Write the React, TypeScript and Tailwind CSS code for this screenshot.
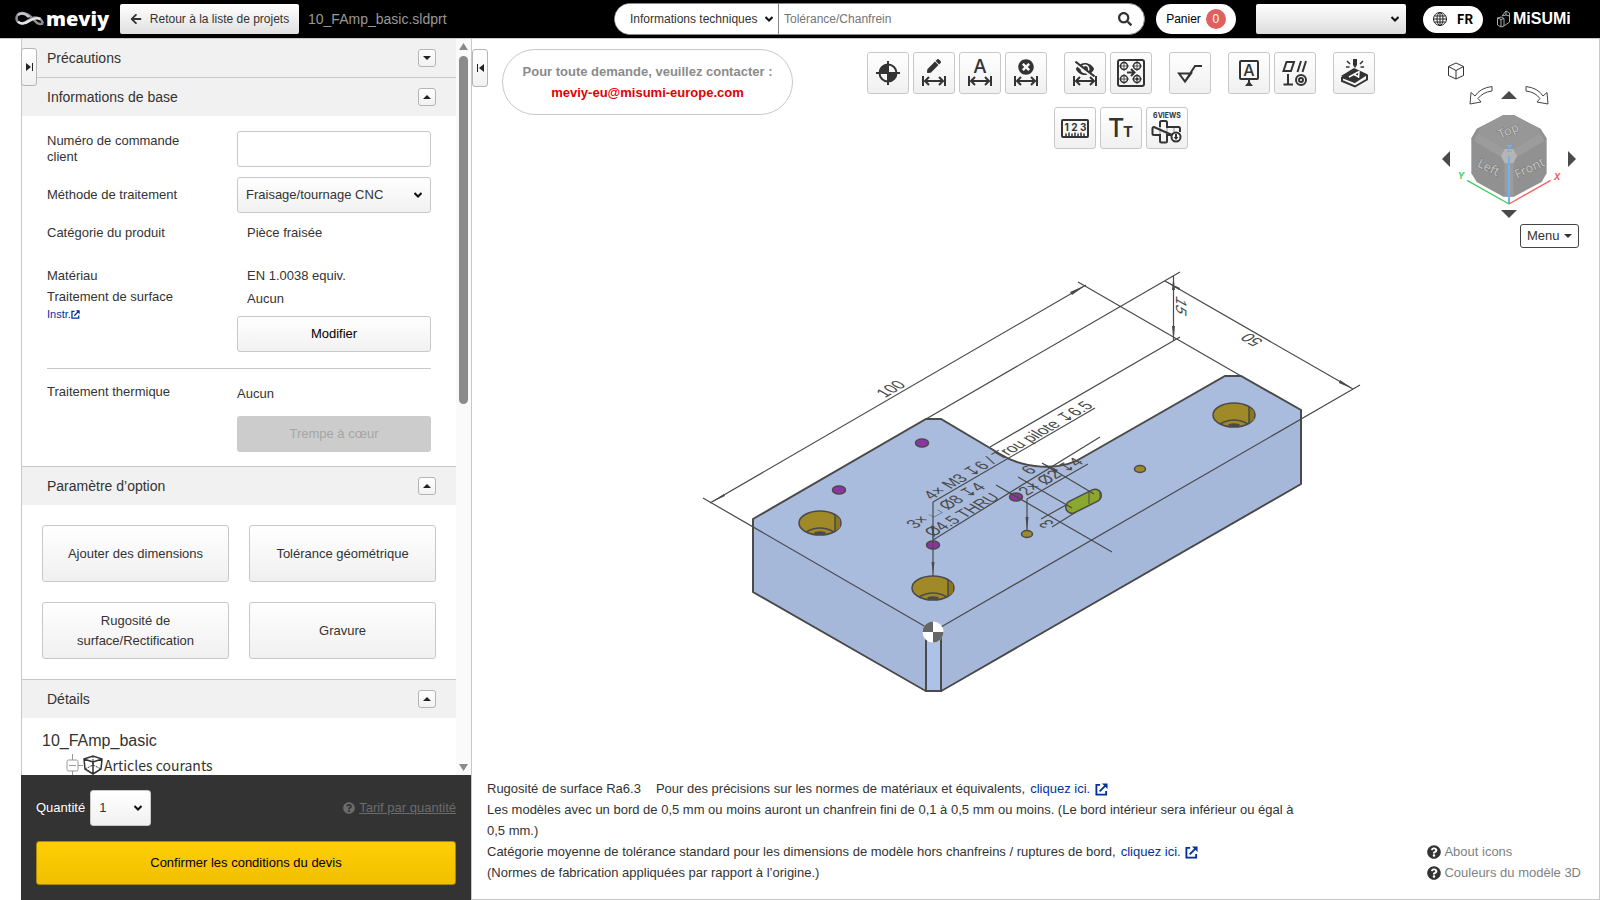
import React from "react";
import { FaArrowLeft, FaEyeSlash, FaPen, FaQuestionCircle, FaSearch, FaTimesCircle } from "react-icons/fa";

const Logo = () => (
  <a href="#" className="flex w-[90px] items-center text-white" aria-label="meviy">
    <svg width="30" height="16" viewBox="0 0 30 16" fill="none" className="shrink-0">
      <path
        d="M28 12.5C25 14 22 12.500 19 9C15.500 5 12 2 7 2C3.500 2 1.500 4.500 1.500 7.500C1.500 10.500 4 12.500 7 12.500C12 12.500 14.500 6.500 20 6.500C24 6.500 26.500 7.500 28 12.500"
        stroke="#8f8f93"
        strokeWidth="2.500"
      />
      <path d="M3 10.500C7 15 12 11.500 15 9.500C18 7.500 21 6 25.500 8" stroke="#e4e4e8" strokeWidth="2.500" />
      <path d="M3 4C7 1 11 3 14 6" stroke="#c9c9ce" strokeWidth="2.500" />
    </svg>
    <span className="ml-px font-['Open_Sans'] text-[20px] leading-5 font-extrabold">meviy</span>
  </a>
);

const ExternalIcon = ({ size }: { size: number }) => (
  <svg width={size} height={size} viewBox="0 0 14 14" className="inline-block" fill="none" stroke="currentColor" strokeWidth="2">
    <path d="M5.500 2H1.500V12.500H12V8.500" />
    <path d="M5 9L12 2" />
    <path d="M7.500 0.500H13.500V6.500Z" fill="currentColor" stroke="none" />
  </svg>
);

const Chevron = ({ className }: { className: string }) => (
  <svg
    width="8"
    height="6"
    viewBox="0 0 8 6"
    fill="none"
    stroke="#111"
    strokeWidth="2"
    className={`pointer-events-none absolute top-1/2 -translate-y-1/2 ${className}`}
  >
    <path d="M0.500 1L4 4.500L7.500 1" />
  </svg>
);

const SectionHeader = ({ title, open = true, first = false }: { title: string; open?: boolean; first?: boolean }) => (
  <div
    className={
      first
        ? "flex h-[38px] items-center justify-between bg-[#f1f1f1] pr-5 pl-[25px]"
        : "flex h-[39px] items-center justify-between border-t border-[#c8c8c8] bg-[#f1f1f1] pr-5 pl-[25px]"
    }
  >
    <h2 className="text-sm">{title}</h2>
    <button
      aria-label={title}
      aria-expanded={open}
      className="flex size-[18px] items-center justify-center rounded-[3px] border border-[#b5b5b5] bg-linear-to-b from-white to-[#f1f1f1]"
    >
      <svg width="8" height="4" viewBox="0 0 8 4" fill="#222">
        {open ? <path d="M4 0L8 4H0Z" /> : <path d="M0 0H8L4 4Z" />}
      </svg>
    </button>
  </div>
);

const ToolButton = ({ label, children }: { label: string; children: React.ReactNode }) => (
  <button
    aria-label={label}
    className="size-[42px] rounded-[3px] border border-[#c8c8c8] bg-linear-to-b from-white to-[#f0f0f0]"
  >
    <svg width="40" height="40" viewBox="1 1 40 40" fill="none" stroke="#333" strokeWidth="2">
      {children}
    </svg>
  </button>
);

// width mark shared by the dimension tools
const Span = () => (
  <path d="M10 24V34M32 24V34M12 29H30M16 25L12 29L16 33M26 25L30 29L26 33" />
);

const Hole = ({ x, y }: { x: number; y: number }) => (
  <g strokeWidth="1.5">
    <circle cx={x} cy={y} r="3.5" />
    <path strokeWidth="0.8" d={`M${x - 5} ${y}H${x + 5}M${x} ${y - 5}V${y + 5}`} />
  </g>
);

const Toolbar = () => (
  <div className="flex flex-1 flex-col items-center gap-[13px] pt-[13px] pl-[10px]">
    <div className="flex gap-[17px]">
      <div className="flex gap-1">
        <ToolButton label="Origine">
          <circle cx="21" cy="21" r="8.500" />
          <path d="M21 21V12.500A8.500 8.500 0 0 0 12.500 21ZM21 21V29.500A8.500 8.500 0 0 0 29.500 21Z" fill="#333" stroke="none" />
          <path d="M21 9V33M9 21H33" />
        </ToolButton>
        <ToolButton label="Modifier la dimension">
          <FaPen x="14" y="7" size={14} color="#333" stroke="none" />
          <Span />
        </ToolButton>
        <ToolButton label="Ajouter un texte">
          <text x="21" y="21" fontSize="19" textAnchor="middle" fill="#333" stroke="none" className="font-['Inter'] font-medium">
            A
          </text>
          <Span />
        </ToolButton>
        <ToolButton label="Supprimer la dimension">
          <FaTimesCircle x="13" y="7" size={16} color="#333" stroke="none" />
          <Span />
        </ToolButton>
      </div>
      <div className="flex gap-1">
        <ToolButton label="Masquer la dimension">
          <FaEyeSlash x="11" y="7" size={20} color="#333" stroke="none" />
          <Span />
        </ToolButton>
        <ToolButton label="Grouper les trous">
          <rect x="8" y="8" width="26" height="26" rx="2" />
          <Hole x={14} y={14} />
          <Hole x={27} y={14} />
          <Hole x={14} y={27} />
          <Hole x={27} y={27} />
          <circle cx="27" cy="27" r="1.500" fill="#333" stroke="none" />
          <path d="M17 20.500H24M21 17L24.500 20.500L21 24" />
        </ToolButton>
      </div>
      <ToolButton label="Rugosité">
        <path d="M10 21.500H22L16 29.500ZM16 29.500L26 14H33" />
      </ToolButton>
      <div className="flex gap-1">
        <ToolButton label="Référence">
          <rect x="12" y="9" width="18" height="18" rx="1" />
          <text x="21" y="24" fontSize="16" textAnchor="middle" fill="#333" stroke="none" className="font-['Inter'] font-medium">
            A
          </text>
          <path d="M21 28V31" />
          <path d="M21 29L25 34H17Z" fill="#333" stroke="none" />
        </ToolButton>
        <ToolButton label="Tolérance géométrique">
          <path d="M9.500 19L12.500 10H20L17 19ZM23.500 20L27 9M28.500 20L32 9M14 22V32M9.500 32.500H19" />
          <circle cx="27" cy="28" r="5" />
          <circle cx="27" cy="28" r="2" />
        </ToolButton>
      </div>
      <ToolButton label="Gravure">
        <path d="M8 24L21 16L35 22.500L22 31Z" fill="#333" stroke="none" />
        <path d="M9 25V29L22 34.500L34 27.500V23M22 30L9 25" strokeWidth="2" />
        <path d="M16 25L26 19.500L25.500 26M21 22.500L25 24.500" stroke="#fff" strokeWidth="1.500" />
        <path d="M20 7H24V13L22 16L20 13Z" fill="#333" stroke="none" />
        <path d="M14 9L17 12M13 15H16.500M30 9L27 12M31 15H27.500" strokeWidth="1.500" />
      </ToolButton>
    </div>
    <div className="flex gap-1">
      <ToolButton label="Dimensions">
        <rect x="8" y="13" width="26" height="17" rx="1" />
        <text x="21.500" y="24" fontSize="10" textAnchor="middle" fill="#333" stroke="none" className="font-['Inter'] font-bold">
          1 2 3
        </text>
        <path d="M12 29V26.500M15 29V25.500M18 29V26.500M21 29V25.500M24 29V26.500M27 29V25.500M30 29V26.500" strokeWidth="1.500" />
      </ToolButton>
      <ToolButton label="Taille du texte">
        <text x="8" y="30" fontSize="25" fill="#333" stroke="none" className="font-['Inter'] font-medium">
          T
        </text>
        <text x="23" y="30" fontSize="15" fill="#333" stroke="none" className="font-['Inter'] font-bold">
          T
        </text>
      </ToolButton>
      <ToolButton label="6 vues">
        <text x="21" y="11" fontSize="7" textAnchor="middle" fill="#333" stroke="none" className="font-['Inter'] font-bold">
          6VIEWS
        </text>
        <path d="M14 20V15.500Q14 14 15.500 14H19.500Q21 14 21 15.500V20H32.500Q34 20 34 22V25M26 28H21V34Q21 35.500 19.500 35.500H15.500Q14 35.500 14 34V28H8Q6.500 28 6.500 26.500V21.500Q6.500 20 8 20Z" />
        <path d="M14 20V28M21 20V28M28 20V25" strokeWidth="0.500" />
        <circle cx="30" cy="30" r="4.500" fill="#fff" />
        <path d="M30 27V31" />
        <path d="M27.500 30H32.500L30 33Z" fill="#333" stroke="none" />
      </ToolButton>
    </div>
  </div>
);

const ViewCube = () => (
  <div className="mr-5 flex w-[140px] flex-col items-center pt-[23px]">
    <button aria-label="Vue isométrique" className="mr-auto ml-2">
      <svg width="18" height="18" viewBox="0 0 18 18" fill="none" stroke="#333">
        <path d="M1.500 4.500L9 1L16.500 4.500V13.500L9 17L1.500 13.500ZM1.500 4.500L9 8.500L16.500 4.500M9 8.500V17" />
      </svg>
    </button>
    <div className="mt-1 flex h-[22px] items-center gap-2">
      <button aria-label="Pivoter à gauche">
        <svg width="24" height="20" viewBox="0 0 24 20" fill="none" stroke="#444">
          <path d="M23 1.500Q11 3 6 11L2 7.500L1 19L12 17L9 13.500Q14 7 23 6Z" />
        </svg>
      </button>
      <button aria-label="Haut">
        <svg width="16" height="8" viewBox="0 0 16 8" fill="#4a4a4a">
          <path d="M8 0L16 8H0Z" />
        </svg>
      </button>
      <button aria-label="Pivoter à droite">
        <svg width="24" height="20" viewBox="0 0 24 20" fill="none" stroke="#444">
          <path d="M1 1.500Q13 3 18 11L22 7.500L23 19L12 17L15 13.500Q10 7 1 6Z" />
        </svg>
      </button>
    </div>
    <div className="mt-[6px] flex w-full items-center justify-between px-[3px]">
      <button aria-label="Gauche">
        <svg width="8" height="16" viewBox="0 0 8 16" fill="#4a4a4a">
          <path d="M8 0V16L0 8Z" />
        </svg>
      </button>
      <svg width="106" height="94" viewBox="1068 336 318 282">
        <path d="M1210 345H1242L1322 386L1340 415V520L1325 546L1242 590H1210L1130 546L1114 520V415L1130 386Z" fill="#919191" />
        <path d="M1210 345H1242L1316 386L1320 400L1240 447H1214L1134 400L1138 386Z" fill="#979797" />
        <path d="M1134 400L1214 447L1204 472L1122 422ZM1320 400L1240 447L1250 472L1334 422ZM1214 490H1240V590H1214Z" fill="#9c9c9c" />
        <path d="M1214 447H1240L1251 468L1240 490H1214L1203 468Z" fill="#b5b5b5" />
        <g fill="#c4c4c4" stroke="#777" strokeWidth="3" paintOrder="stroke" fontSize="38" textAnchor="middle" className="font-['Noto_Sans']">
          <text transform="translate(1230 404) rotate(-24)">Top</text>
          <text transform="translate(1160 514) rotate(26)">Left</text>
          <text transform="translate(1294 516) rotate(-26)">Front</text>
        </g>
        <path d="M1227 468V612" stroke="#70b0f5" strokeWidth="6" />
        <path d="M1227 612L1101 541" stroke="#3fce5f" strokeWidth="4" />
        <path d="M1227 612L1352 541" stroke="#f5605f" strokeWidth="4" />
        <g fontSize="27" textAnchor="middle" className="font-['Inter'] font-bold italic">
          <text x="1228" y="456" fill="#70b0f5">Z</text>
          <text x="1083" y="538" fill="#3fce5f">Y</text>
          <text x="1371" y="540" fill="#f5605f">X</text>
        </g>
      </svg>
      <button aria-label="Droite">
        <svg width="8" height="16" viewBox="0 0 8 16" fill="#4a4a4a">
          <path d="M0 0V16L8 8Z" />
        </svg>
      </button>
    </div>
    <button aria-label="Bas" className="mt-1">
      <svg width="16" height="8" viewBox="0 0 16 8" fill="#4a4a4a">
        <path d="M0 0H16L8 8Z" />
      </svg>
    </button>
    <button className="mt-[6px] ml-auto flex h-6 w-[59px] items-center justify-between rounded-[3px] border border-[#444] px-[6px] text-[13px]">
      Menu
      <svg width="8" height="4" viewBox="0 0 8 4" fill="#333">
        <path d="M0 0H8L4 4Z" />
      </svg>
    </button>
  </div>
);

const BIG_HOLES = [
  [820, 523],
  [933, 588],
  [1234, 415],
];
const TAPPED_HOLES = [
  [922, 443],
  [839, 490],
  [1016, 497],
  [933, 545],
];
const PIN_HOLES = [
  [1027, 534],
  [1140, 469],
];

const Model = () => (
  <svg width="670" height="434" viewBox="701 262 670 434" fill="none" stroke="#4a4a4a" strokeWidth="1.5" className="mx-auto mt-[14px]">
    <path
      d="M753 519L926 419H941L1000 454C1022 468 1060 473 1085 456L1225 376H1241L1301 410V484L941 691H926L753 592Z"
      fill="#aabcdd"
      strokeWidth="2"
    />
    <path d="M754 528L926 627V690L754 591ZM941 627L1300 420V483L941 690Z" fill="#a6b8da" stroke="none" />
    <path d="M926 627H941V691H926Z" fill="#adc2e6" strokeWidth="2" />
    {BIG_HOLES.map(([x, y]) => (
      <g key={x}>
        <ellipse cx={x} cy={y} rx="21" ry="12" fill="#a08a28" />
        <path d={`M${x + 15} ${y - 8}L${x + 20} ${y - 4}L${x + 20} ${y + 5}L${x + 15} ${y + 8}Z`} fill="#8b771f" stroke="none" />
        <path d={`M${x - 14} ${y + 9}Q${x} ${y + 1} ${x + 14} ${y + 9}M${x + 15} ${y - 8}V${y + 8}`} />
        <ellipse cx={x} cy={y + 10} rx="5" ry="1" fill="#4a4a4a" />
      </g>
    ))}
    {TAPPED_HOLES.map(([x, y]) => (
      <ellipse key={x} cx={x} cy={y} rx="6.5" ry="4" fill="#8c34a0" />
    ))}
    {PIN_HOLES.map(([x, y]) => (
      <ellipse key={x} cx={x} cy={y} rx="5.500" ry="3.500" fill="#a08a28" />
    ))}
    <path d="M1072 507L1095 495.500" strokeWidth="14" strokeLinecap="round" />
    <path d="M1072 507L1095 495.500" stroke="#8ba82e" strokeWidth="11" strokeLinecap="round" />
    <path d="M1089 492V504M1100 491V499" strokeWidth="1" />

    <path
      strokeWidth="1.2"
      d="M703 498L926 627M710 503L1086 285M1078 282L1241 376M926 419L1180 272M990 447L1180 337M1173.500 276V341M1165 281L1353 389M941 627L1360 385"
    />
    <path strokeWidth="1.2" d="M933 502L1095 408M933 502V576M933 540L1100 437M1027 499V531M1027 499L1088 464" />
    <path strokeWidth="1.2" d="M1042 463L1094 494M1018 477L1072 508M996 485L1112 552M1041 519L1066 505M1052 527L1076 512" />
    <g fill="#4a4a4a" stroke="none">
      <path d="M710 503L724 494L725 496ZM1086 285L1070 292L1072 295ZM1173.500 276L1172 290H1175ZM1173.500 341L1172 326H1175ZM1165 281L1180 288L1179 290ZM1353 389L1339 383L1340 380Z" />
      <path d="M933 574L931.500 562H934.500ZM933 540L931.500 526H934.500ZM1027 530L1025.500 517H1028.500ZM1042 463L1056 473L1058 470Z" />
    </g>
    {/* notes lie in the planes of the part */}
    <g fill="#4a4a4a" stroke="none" fontSize="15" className="font-['Liberation_Sans','DejaVu_Sans',sans-serif]">
      <text transform="translate(885 398) rotate(-30) skewX(30)">100</text>
      <text transform="translate(1176 295) rotate(90) skewX(-30)">15</text>
      <text transform="translate(1264 341) rotate(210) skewX(-30)">50</text>
      <text transform="translate(932 500) rotate(-30) skewX(30)">4× M3 ↧6 / Trou pilote ↧6.5</text>
      <text transform="translate(915 529) rotate(-30) skewX(30)">3× ⌴ Ø8 ↧4</text>
      <text transform="translate(933 537) rotate(-30) skewX(30)">Ø4.5 THRU</text>
      <text transform="translate(1027 496) rotate(-30) skewX(30)">2× Ø2 ↧4</text>
      <text transform="translate(1030 475) rotate(-30) skewX(30)">6</text>
      <text transform="translate(1055 523) rotate(210) skewX(-30)">3</text>
    </g>
    <g stroke="none">
      <circle cx="933" cy="632" r="10.500" fill="#fff" />
      <path d="M933 632V621.500A10.500 10.500 0 0 0 922.500 632ZM933 632V642.500A10.500 10.500 0 0 0 943.500 632Z" fill="#666" />
    </g>
  </svg>
);

const OPTIONS = ["Ajouter des dimensions", "Tolérance géométrique", "Rugosité de surface/Rectification", "Gravure"];

const Sidebar = () => (
  <aside className="relative ml-[21px] flex w-[451px] flex-col border-r border-[#c8c8c8]">
    <button
      aria-label="Réduire le panneau"
      className="absolute top-[9px] left-0 z-10 flex h-[38px] w-4 items-center justify-center rounded-[3px] border border-[#b5b5b5] bg-linear-to-b from-white to-[#f1f1f1]"
    >
      <svg width="7" height="8" viewBox="0 0 7 8" fill="#222">
        <path d="M0 0L5 4L0 8ZM6 0H7V8H6Z" />
      </svg>
    </button>
    <div className="flex min-h-0 flex-1 border-l border-[#c8c8c8]">
      <div className="flex-1 overflow-hidden">
        <SectionHeader title="Précautions" open={false} first />
        <SectionHeader title="Informations de base" />
        <div className="px-[25px] pt-[15px] pb-[14px]">
          <div className="flex justify-between">
            <label htmlFor="order" className="w-[150px] pt-[2px] leading-4">
              Numéro de commande client
            </label>
            <input id="order" className="h-9 w-[194px] rounded-[3px] border border-[#c8c8c8] px-2" />
          </div>
          <div className="mt-[10px] flex items-center justify-between">
            <label htmlFor="method">Méthode de traitement</label>
            <div className="relative w-[194px]">
              <select
                id="method"
                className="h-9 w-full appearance-none rounded-[3px] border border-[#c8c8c8] bg-linear-to-b from-white to-[#f1f1f1] pr-5 pl-2"
              >
                <option>Fraisage/tournage CNC</option>
              </select>
              <Chevron className="right-[9px]" />
            </div>
          </div>
          <dl className="mt-[10px] grid grid-cols-[200px_1fr]">
            <dt>Catégorie du produit</dt>
            <dd>Pièce fraisée</dd>
            <dt className="mt-[23px]">Matériau</dt>
            <dd className="mt-[23px]">EN 1.0038 equiv.</dd>
            <dt className="mt-px">Traitement de surface</dt>
            <dd className="mt-[3px]">Aucun</dd>
          </dl>
          <div className="flex items-start justify-between">
            <a href="#" className="-mt-px flex items-center text-[11px] leading-3 text-[#003399]">
              Instr.
              <ExternalIcon size={9} />
            </a>
            <button className="mt-[7px] h-9 w-[194px] rounded-[3px] border border-[#c8c8c8] bg-linear-to-b from-white to-[#f1f1f1] text-black">
              Modifier
            </button>
          </div>
          <hr className="mt-4 border-[#c8c8c8]" />
          <div className="mt-[13px] flex justify-between">
            <span>Traitement thermique</span>
            <div className="w-[194px] pt-[2px]">
              <p>Aucun</p>
              <button disabled className="mt-3 h-9 w-full rounded-[3px] bg-[#ccc] text-[#a5a5a5]">
                Trempe à cœur
              </button>
            </div>
          </div>
        </div>
        <SectionHeader title="Paramètre d’option" />
        <div className="grid grid-cols-2 gap-5 p-5">
          {OPTIONS.map((option) => (
            <button
              key={option}
              className="h-[57px] rounded-[3px] border border-[#c8c8c8] bg-linear-to-b from-white to-[#f0f0f0] px-6"
            >
              {option}
            </button>
          ))}
        </div>
        <SectionHeader title="Détails" />
        <div className="pt-[13px] pl-5">
          <p className="text-base leading-5">10_FAmp_basic</p>
          <div className="ml-6 flex h-7 items-center">
            <svg width="17" height="28" viewBox="0 0 17 28" fill="none" stroke="#999" className="shrink-0">
              <path d="M6.500 3V9M6.500 20V28M12 14.500H17M3 14.500H10" />
              <rect x="1" y="9" width="11" height="11" rx="1.500" />
            </svg>
            <svg width="20" height="20" viewBox="0 0 20 20" fill="none" stroke="#333" strokeWidth="1.500" className="shrink-0">
              <path d="M1 4L10 1L19 4L18 14L10 19L2 14ZM1 4L10 7L19 4M10 7V19" />
              <path d="M10 1V11M2 14L10 10L18 14" strokeWidth="1" strokeDasharray="2 1" />
            </svg>
            <span className="ml-px font-['Noto_Sans_CJK_JP',sans-serif] text-sm">Articles courants</span>
          </div>
        </div>
      </div>
      <div className="flex w-[15px] flex-col items-center bg-[#fafafa] pt-1 pb-1">
        <svg width="9" height="7" viewBox="0 0 9 7" fill="#8b8b8b">
          <path d="M4.500 0L9 7H0Z" />
        </svg>
        <div className="mt-[6px] h-[348px] w-[9px] rounded-full bg-[#8b8b8b]" />
        <svg width="9" height="7" viewBox="0 0 9 7" fill="#8b8b8b" className="mt-auto">
          <path d="M0 0H9L4.500 7Z" />
        </svg>
      </div>
    </div>
    <div className="bg-[#333] px-[15px] pt-[15px] pb-[15px]">
      <div className="flex items-center">
        <label htmlFor="quantity" className="text-white">
          Quantité
        </label>
        <div className="relative ml-[5px] w-[61px]">
          <select
            id="quantity"
            className="h-9 w-full appearance-none rounded-[3px] border border-[#c8c8c8] bg-linear-to-b from-white to-[#f1f1f1] pr-5 pl-2"
          >
            <option>1</option>
          </select>
          <Chevron className="right-[9px]" />
        </div>
        <a href="#" className="ml-auto flex items-center gap-1 text-[#6b6b6b]">
          <FaQuestionCircle size={12} />
          <span className="underline">Tarif par quantité</span>
        </a>
      </div>
      <button className="mt-[15px] h-11 w-full rounded-[3px] border border-[#a88a00] bg-linear-to-b from-[#ffce05] to-[#f0c000] text-black">
        Confirmer les conditions du devis
      </button>
    </div>
  </aside>
);

const Header = () => (
  <header className="flex h-[38px] shrink-0 items-center bg-black pr-[29px] pl-[15px]">
    <Logo />
    <button className="ml-[15px] flex h-[30px] w-[179px] items-center justify-center gap-2 rounded-[2px] bg-linear-to-b from-white to-[#e0e0e0] text-xs">
      <FaArrowLeft size={12} />
      Retour à la liste de projets
    </button>
    <span className="ml-[9px] text-sm text-[#999]">10_FAmp_basic.sldprt</span>
    <div className="ml-auto flex h-8 w-[531px] items-center overflow-hidden rounded-full border border-[#888] bg-white text-xs">
      <div className="relative h-full w-[164px] border-r border-[#888]">
        <select aria-label="Type de recherche" className="h-full w-full appearance-none bg-white pr-4 pl-[15px]">
          <option>Informations techniques</option>
        </select>
        <Chevron className="right-[5px]" />
      </div>
      <input aria-label="Recherche" placeholder="Tolérance/Chanfrein" className="h-full flex-1 px-[5px] placeholder:text-[#757575]" />
      <button aria-label="Rechercher" className="mr-3">
        <FaSearch size={14} />
      </button>
    </div>
    <button className="ml-[11px] flex h-[30px] w-20 items-center justify-center gap-[5px] rounded-full bg-white text-xs text-black">
      Panier
      <span className="flex size-5 items-center justify-center rounded-full bg-[#e06060] text-white">0</span>
    </button>
    <div className="relative ml-5 w-[150px]">
      <select
        aria-label="Compte"
        className="block h-[30px] w-full appearance-none rounded-[2px] bg-linear-to-b from-white to-[#dcdcdc] px-2"
      >
        <option></option>
      </select>
      <Chevron className="right-[7px]" />
    </div>
    <button className="ml-[17px] flex h-[27px] w-[60px] items-center justify-center gap-[10px] rounded-full bg-white font-['Noto_Sans_CJK_JP',sans-serif] text-[13px] font-bold text-black">
      <svg width="14" height="14" viewBox="0 0 14 14" fill="none" stroke="#222">
        <circle cx="7" cy="7" r="6.500" />
        <ellipse cx="7" cy="7" rx="3" ry="6.500" />
        <path d="M7 0V14M0.500 7H13.500M1.500 4H12.500M1.500 10H12.500" />
      </svg>
      FR
    </button>
    <a href="#" aria-label="MISUMI" className="ml-[14px] flex w-[74px] items-center gap-[3px] text-white">
      <svg width="13" height="18" viewBox="0 0 13 18" fill="none" stroke="#aaa" className="shrink-0">
        <path d="M0.500 8L4 7L7 8.500V16L4 17L0.500 15ZM0.500 8L4 9.500L7 8.500M4 9.500V17M5 6L9 1L12.500 3V12L7 16M9 1V5L12.500 6M5 6L9 5" />
      </svg>
      <span className="text-base leading-5 font-bold">MiSUMi</span>
    </a>
  </header>
);

const App = () => {
  return (
    <div className="flex h-screen flex-col overflow-hidden bg-white font-['Liberation_Sans',Arial,sans-serif] text-[13px] leading-5 text-[#333]">
      <Header />
      <div className="flex min-h-0 flex-1 border-t border-[#c8c8c8]">
        <Sidebar />
        <main className="relative flex flex-1 flex-col border-r border-b border-[#c8c8c8]">
          <button
            aria-label="Ouvrir le panneau"
            className="absolute top-[10px] left-0 flex h-[38px] w-4 items-center justify-center rounded-[3px] border border-[#b5b5b5] bg-linear-to-b from-white to-[#f1f1f1]"
          >
            <svg width="7" height="8" viewBox="0 0 7 8" fill="#222">
              <path d="M7 0L2 4L7 8ZM0 0H1V8H0Z" />
            </svg>
          </button>
          <div className="flex items-start">
            <div className="mt-[10px] ml-[30px] flex h-[66px] w-[291px] flex-col justify-center rounded-full border border-[#c8c8c8] text-center leading-[21px] font-bold">
              <p className="text-[#8b8b8b]">Pour toute demande, veuillez contacter :</p>
              <a href="mailto:meviy-eu@misumi-europe.com" className="text-[#e00000]">
                meviy-eu@misumi-europe.com
              </a>
            </div>
            <Toolbar />
            <ViewCube />
          </div>
          <Model />
          <footer className="mt-auto flex items-end justify-between pr-[18px] pb-4 pl-[15px] leading-[21px]">
            <div className="w-[815px]">
              <p>
                <span className="mr-[15px]">Rugosité de surface Ra6.3</span>
                Pour des précisions sur les normes de matériaux et équivalents,
                <a href="#" className="ml-[5px] text-[#003399]">
                  cliquez ici. <span className="ml-px"><ExternalIcon size={13} /></span>
                </a>
              </p>
              <p>
                Les modèles avec un bord de 0,5 mm ou moins auront un chanfrein fini de 0,1 à 0,5 mm ou moins. (Le bord
                intérieur sera inférieur ou égal à 0,5 mm.)
              </p>
              <p>
                Catégorie moyenne de tolérance standard pour les dimensions de modèle hors chanfreins / ruptures de bord,
                <a href="#" className="ml-[5px] text-[#003399]">
                  cliquez ici. <span className="ml-px"><ExternalIcon size={13} /></span>
                </a>
              </p>
              <p>(Normes de fabrication appliquées par rapport à l’origine.)</p>
            </div>
            <div className="flex flex-col text-[#7f7f7f]">
              <a href="#" className="flex items-center gap-[3px]">
                <FaQuestionCircle size={14} color="#333" />
                About icons
              </a>
              <a href="#" className="flex items-center gap-[3px]">
                <FaQuestionCircle size={14} color="#333" />
                Couleurs du modèle 3D
              </a>
            </div>
          </footer>
        </main>
      </div>
    </div>
  );
};

export default App;
